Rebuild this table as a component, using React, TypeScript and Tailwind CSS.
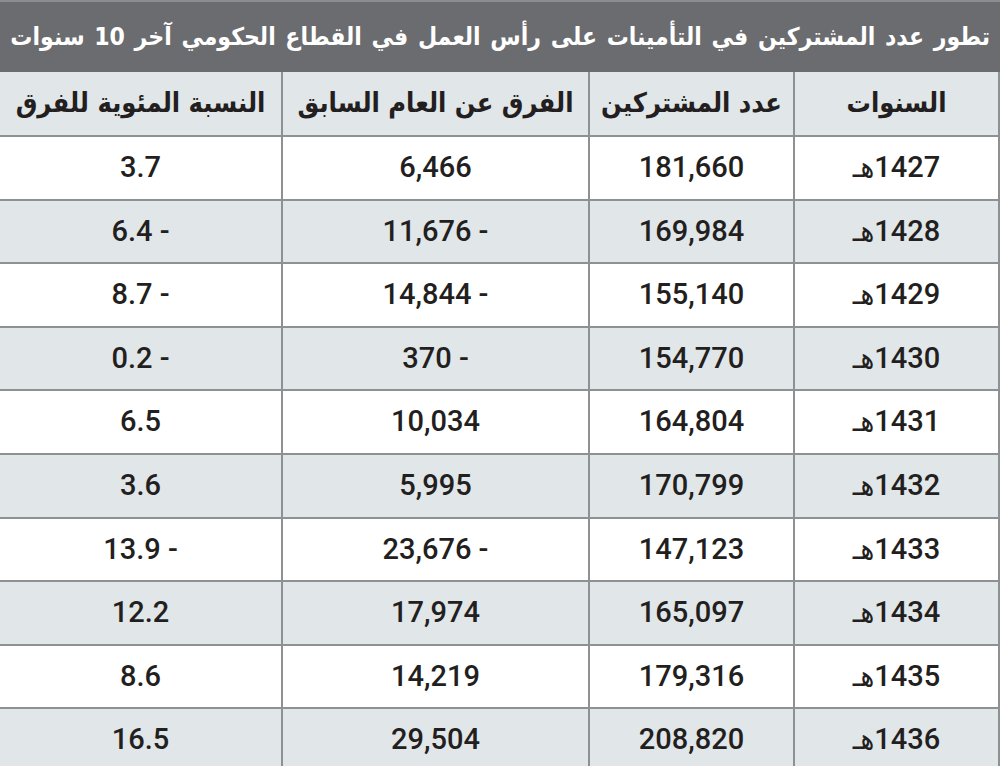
const ROWS = [
  { year: '1427', count: '181,660', diff: '6,466', pct: '3.7' },
  { year: '1428', count: '169,984', diff: '11,676 -', pct: '6.4 -' },
  { year: '1429', count: '155,140', diff: '14,844 -', pct: '8.7 -' },
  { year: '1430', count: '154,770', diff: '370 -', pct: '0.2 -' },
  { year: '1431', count: '164,804', diff: '10,034', pct: '6.5' },
  { year: '1432', count: '170,799', diff: '5,995', pct: '3.6' },
  { year: '1433', count: '147,123', diff: '23,676 -', pct: '13.9 -' },
  { year: '1434', count: '165,097', diff: '17,974', pct: '12.2' },
  { year: '1435', count: '179,316', diff: '14,219', pct: '8.6' },
  { year: '1436', count: '208,820', diff: '29,504', pct: '16.5' },
]

const arabic = "font-['DejaVu_Sans_Condensed','DejaVu_Sans',sans-serif]"
const nums = "font-['Roboto','Liberation_Sans',sans-serif]"

export default function App() {
  return (
    <div dir="rtl" className="w-[1000px] h-[766px] overflow-hidden bg-white text-[#231f20]">
      {/* Title bar */}
      <div className="h-[72px] bg-[#6b6c6f] border-t-2 border-[#8c8d90] flex items-center pr-[10px]">
        <h1 className={`${arabic} text-white text-[24.5px] font-bold leading-none whitespace-nowrap [word-spacing:2px]`}>
          تطور عدد المشتركين في التأمينات على رأس العمل في القطاع الحكومي آخر 10 سنوات
        </h1>
      </div>

      <table className="w-full border-collapse table-fixed">
        <colgroup>
          <col className="w-[205px]" />
          <col className="w-[205px]" />
          <col className="w-[307px]" />
          <col className="w-[283px]" />
        </colgroup>
        <thead>
          <tr className="h-[64px] bg-[#e1e6e9]">
            {['السنوات', 'عدد المشتركين', 'الفرق عن العام السابق', 'النسبة المئوية للفرق'].map(h => (
              <th
                key={h}
                className={`${arabic} border-2 border-[#8e9194] border-t-0 text-[27px] font-bold text-center whitespace-nowrap`}
              >
                {h}
              </th>
            ))}
          </tr>
        </thead>
        <tbody>
          {ROWS.map((r, i) => (
            <tr key={r.year} className={`h-[63.6px] ${i % 2 === 0 ? 'bg-white' : 'bg-[#e1e6e9]'}`}>
              <td className={`${nums} border-2 border-[#8e9194] text-[29px] font-medium text-center`}>
                {r.year}
                <span className={arabic}>هـ</span>
              </td>
              <td className={`${nums} border-2 border-[#8e9194] text-[29px] font-medium text-center`} dir="ltr">
                {r.count}
              </td>
              <td className={`${nums} border-2 border-[#8e9194] text-[29px] font-medium text-center`} dir="ltr">
                {r.diff}
              </td>
              <td className={`${nums} border-2 border-[#8e9194] text-[29px] font-medium text-center`} dir="ltr">
                {r.pct}
              </td>
            </tr>
          ))}
        </tbody>
      </table>
    </div>
  )
}
